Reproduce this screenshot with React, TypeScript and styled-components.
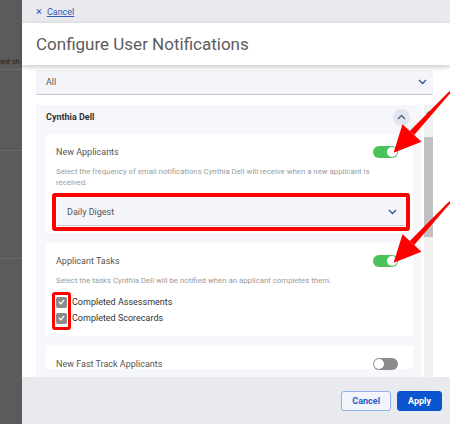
import styled, { createGlobalStyle } from "styled-components";

const GlobalStyle = createGlobalStyle`
  html, body { margin: 0; padding: 0; }
  body {
    font-family: Roboto, "Liberation Sans", Arial, sans-serif;
    background: #fff;
  }
  * { box-sizing: border-box; }
`;

const Page = styled.div`
  position: relative;
  display: flex;
  width: 450px;
  height: 424px;
  overflow: hidden;
`;

const Backdrop = styled.div`
  width: 22px;
  flex-shrink: 0;
  background: #5b5b5b;
  display: flex;
  flex-direction: column;
  overflow: hidden;
`;

const BackdropRow = styled.div<{ $h: number }>`
  height: ${p => p.$h}px;
  flex-shrink: 0;
  border-bottom: 1px solid #6b6b6b;
  font-size: 8px;
  letter-spacing: -0.4px;
  line-height: 11px;
  white-space: nowrap;
  color: #262626;
  display: flex;
  align-items: flex-end;
  padding-bottom: 2px;
`;

const Panel = styled.div`
  flex: 1;
  min-width: 0;
  display: flex;
  flex-direction: column;
  background: #fff;
`;

const TopBar = styled.div`
  height: 23px;
  flex-shrink: 0;
  background: #e9eaee;
  display: flex;
  align-items: center;
  gap: 5px;
  padding-left: 14px;
  font-size: 9px;
  color: #3558b8;
`;

const CloseMark = styled.span`
  font-size: 11px;
`;

const CancelLink = styled.a`
  color: #3558b8;
  text-decoration: underline;
  cursor: pointer;
`;

const TitleBar = styled.div`
  position: relative;
  z-index: 1;
  height: 42px;
  flex-shrink: 0;
  display: flex;
  align-items: center;
  padding-left: 14px;
  background: #fff;
  font-size: 17px;
  color: #5c5c5c;
  box-shadow: 0 2px 5px rgba(0, 0, 0, 0.22);
`;

const Body = styled.div`
  flex: 1;
  min-height: 0;
  display: flex;
  flex-direction: column;
  padding: 5px 17px 0 14px;
  overflow: hidden;
`;

const SelectBox = styled.div<{ $h: number; $pad: number }>`
  height: ${p => p.$h}px;
  flex-shrink: 0;
  display: flex;
  align-items: center;
  justify-content: space-between;
  padding: 0 ${p => p.$pad}px 0 10px;
  background: #f4f5fa;
  border-bottom: 1px solid #c6c8d0;
  font-size: 9px;
  color: #555;
`;

const ScrollArea = styled.div`
  flex: 1;
  min-height: 0;
  margin-top: 10px;
  display: flex;
  gap: 3px;
`;

const Card = styled.div`
  flex: 1;
  display: flex;
  flex-direction: column;
  gap: 10px;
  padding: 0 8px 0 10px;
  background: #f6f7fb;
`;

const CardHeader = styled.div`
  height: 29px;
  flex-shrink: 0;
  display: flex;
  align-items: center;
  justify-content: space-between;
  padding-bottom: 5px;
  margin-bottom: -10px;
  font-size: 9px;
  font-weight: 700;
  color: #333;
`;

const Collapse = styled.button`
  width: 17px;
  height: 17px;
  margin-right: 3px;
  border: none;
  border-radius: 50%;
  background: #e3e5ee;
  display: flex;
  align-items: center;
  justify-content: center;
  padding: 0;
`;

const Section = styled.div`
  flex-shrink: 0;
  background: #fff;
  padding: 12px 15px 0 10px;
`;

const SectionHead = styled.div`
  height: 11px;
  display: flex;
  align-items: center;
  justify-content: space-between;
  font-size: 9px;
  color: #555;
`;

const Desc = styled.div`
  margin-top: 9px;
  font-size: 7.8px;
  line-height: 11px;
  color: #9b9b9b;
`;

const Toggle = styled.div<{ $on: boolean }>`
  width: 25px;
  height: 12px;
  border-radius: 6px;
  background: ${p => (p.$on ? "#4cc35a" : "#8c8c8c")};
  display: flex;
  align-items: center;
  justify-content: ${p => (p.$on ? "flex-end" : "flex-start")};
  padding: 0 1px;
  &::after {
    content: "";
    width: 10px;
    height: 10px;
    border-radius: 50%;
    background: #fff;
  }
`;

const Highlight = styled.div`
  margin: 5px -12px 2px -4px;
  border: 4px solid #ff0000;
  border-radius: 3px;
  padding: 1px;
`;

const CheckList = styled.div`
  position: relative;
  margin: 8px 0 10px;
  display: flex;
  flex-direction: column;
`;

const CheckFrame = styled.div`
  position: absolute;
  left: -4px;
  top: -2px;
  width: 19px;
  height: 38px;
  border: 3px solid #ff0000;
  border-radius: 3px;
`;

const CheckRow = styled.label`
  height: 16px;
  display: flex;
  align-items: center;
  gap: 5px;
  font-size: 9px;
  color: #333;
`;

const CheckBox = styled.span`
  width: 11px;
  height: 11px;
  border-radius: 2px;
  background: #8a8a8a;
  display: flex;
  align-items: center;
  justify-content: center;
`;

const Scrollbar = styled.div`
  width: 9px;
  flex-shrink: 0;
  display: flex;
  flex-direction: column;
  align-items: center;
  background: #f1f1f1;
`;

const ScrollArrow = styled.div`
  height: 15px;
  display: flex;
  align-items: center;
  &::before {
    content: "";
    border-left: 3px solid transparent;
    border-right: 3px solid transparent;
    border-bottom: 3px solid #505050;
  }
`;

const Thumb = styled.div`
  width: 100%;
  height: 100px;
  margin-top: 17px;
  background: #c1c1c1;
`;

const Footer = styled.div`
  height: 47px;
  flex-shrink: 0;
  display: flex;
  align-items: center;
  justify-content: flex-end;
  gap: 6px;
  padding-right: 8px;
  background: #e9eaee;
`;

const Button = styled.button<{ $primary?: boolean }>`
  height: 20px;
  padding: 0 10px;
  border-radius: 3px;
  border: 1px solid ${p => (p.$primary ? "#0b55d0" : "#8fb0e8")};
  background: ${p => (p.$primary ? "#0b55d0" : "#f2f5fc")};
  color: ${p => (p.$primary ? "#fff" : "#2d5bc0")};
  font-family: Roboto, "Liberation Sans", Arial, sans-serif;
  font-size: 9px;
  font-weight: 700;
`;

const Annotations = styled.svg`
  position: absolute;
  left: 0;
  top: 0;
  pointer-events: none;
`;

function Chevron({ up = false, color = "#34529b" }: { up?: boolean; color?: string }) {
  return (
    <svg width="9" height="6" viewBox="0 0 9 6">
      <polyline
        points={up ? "1,5 4.5,1.5 8,5" : "1,1 4.5,4.5 8,1"}
        fill="none"
        stroke={color}
        strokeWidth="1.3"
      />
    </svg>
  );
}

function Check() {
  return (
    <svg width="7" height="6" viewBox="0 0 7 6">
      <polyline points="1,3 2.8,4.8 6,1" fill="none" stroke="#fff" strokeWidth="1.3" />
    </svg>
  );
}

function Arrow({ dy }: { dy: number }) {
  return (
    <g transform={`translate(0 ${dy})`} fill="#f00">
      <polygon points="450.7,92.7 449.3,91.3 409.8,131 414.2,135" />
      <polygon points="393.6,152.8 402.5,124.2 421.5,141.8" />
    </g>
  );
}

export default function App() {
  return (
    <Page>
      <GlobalStyle />
      <Backdrop>
        <BackdropRow $h={70}>ent sh</BackdropRow>
        <BackdropRow $h={81} />
        <BackdropRow $h={108} />
      </Backdrop>
      <Panel>
        <TopBar>
          <CloseMark>×</CloseMark>
          <CancelLink>Cancel</CancelLink>
        </TopBar>
        <TitleBar>Configure User Notifications</TitleBar>
        <Body>
          <SelectBox $h={25} $pad={6}>
            All
            <Chevron />
          </SelectBox>
          <ScrollArea>
            <Card>
              <CardHeader>
                Cynthia Dell
                <Collapse>
                  <Chevron up color="#4a5a86" />
                </Collapse>
              </CardHeader>
              <Section>
                <SectionHead>
                  New Applicants
                  <Toggle $on />
                </SectionHead>
                <Desc>
                  Select the frequency of email notifications Cynthia Dell will receive when a new
                  applicant is received.
                </Desc>
                <Highlight>
                  <SelectBox $h={28} $pad={8}>
                    Daily Digest
                    <Chevron />
                  </SelectBox>
                </Highlight>
              </Section>
              <Section>
                <SectionHead>
                  Applicant Tasks
                  <Toggle $on />
                </SectionHead>
                <Desc>Select the tasks Cynthia Dell will be notified when an applicant completes them.</Desc>
                <CheckList>
                  <CheckRow>
                    <CheckBox><Check /></CheckBox>
                    Completed Assessments
                  </CheckRow>
                  <CheckRow>
                    <CheckBox><Check /></CheckBox>
                    Completed Scorecards
                  </CheckRow>
                  <CheckFrame />
                </CheckList>
              </Section>
              <Section>
                <SectionHead>
                  New Fast Track Applicants
                  <Toggle $on={false} />
                </SectionHead>
              </Section>
            </Card>
            <Scrollbar>
              <ScrollArrow />
              <Thumb />
            </Scrollbar>
          </ScrollArea>
        </Body>
        <Footer>
          <Button>Cancel</Button>
          <Button $primary>Apply</Button>
        </Footer>
      </Panel>
      <Annotations width="450" height="424" viewBox="0 0 450 424">
        <Arrow dy={0} />
        <Arrow dy={110} />
      </Annotations>
    </Page>
  );
}
